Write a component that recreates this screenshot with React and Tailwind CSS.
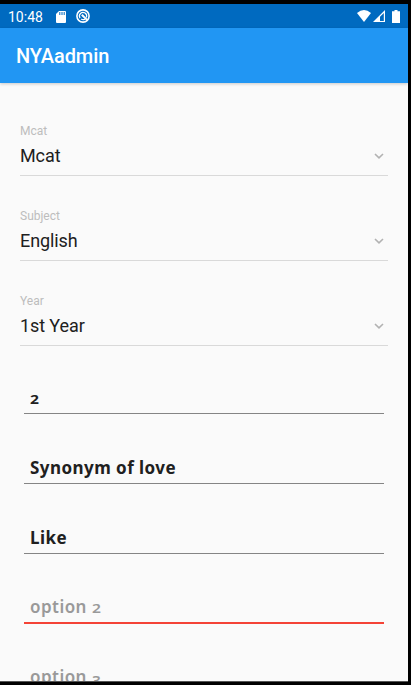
import React from "react";

function StatusBar() {
  return (
    <div className="flex h-6 items-center bg-[#006ac0] pl-2 text-white">
      <span className="w-12 pt-px text-[14px] leading-6">10:48</span>
      <svg className="mt-px" width="10" height="12" viewBox="0 0 10 12" fill="none">
        <path d="M3 0H9Q10 0 10 1V11Q10 12 9 12H1Q0 12 0 11V3Z" fill="#fff" />
        <path d="M3.8 1V4M6 1V4M8.2 1V4" stroke="#006ac0" strokeWidth="1" />
      </svg>
      <svg className="ml-[10px]" width="14" height="14" viewBox="0 0 14 14" fill="none" stroke="#fff">
        <circle cx="7" cy="7" r="6.1" strokeWidth="1.6" />
        <path d="M4.1 9.1A3.6 3.6 0 1 1 10.3 8.5M5.1 10.1Q7 11.3 9 10.2" strokeWidth="1.2" />
        <path d="M5.8 5.8L11 10.9" strokeWidth="2" />
      </svg>
      <svg className="ml-auto" width="14" height="12" viewBox="0 0 14 12">
        <path d="M0 3Q7-3 14 3L7 12Z" fill="#fff" />
      </svg>
      <svg className="ml-[2px]" width="12" height="12" viewBox="0 0 12 12">
        <path d="M0 12L12 0V12Z" fill="#fff" />
        <path d="M7 6.8L10.8 3V10.9H7Z" fill="#006ac0" />
      </svg>
      <svg className="ml-[7px] mr-2" width="8" height="13" viewBox="0 0 8 13">
        <path d="M2.5 0H5.5V1.2H8V13H0V1.2H2.5Z" fill="#fff" />
      </svg>
    </div>
  );
}

function SelectField({ label, value }) {
  return (
    <div className="mx-5 flex h-[85px] flex-col">
      <span className="text-[12px] leading-4 text-[#bdbdbd]">{label}</span>
      <div className="mt-[5px] flex h-6 items-center justify-between">
        <span className="text-[18px] leading-6 tracking-[-0.1px] text-[#202020]">{value}</span>
        <svg className="mr-1 mb-px" width="10" height="6" viewBox="0 0 10 6" fill="none">
          <path d="M1 1L5 4.8L9 1" stroke="#b2b2b2" strokeWidth="1.6" />
        </svg>
      </div>
      <div className="mt-[7px] h-px shrink-0 bg-[#d9d9d9]" />
    </div>
  );
}

function Numeral({ children, low }) {
  return (
    <span className={low ? "relative top-[3px] inline-block origin-bottom-left scale-x-110 text-[14px] leading-none" : "inline-block origin-bottom-left scale-x-[1.2] text-[13px] leading-none"}>
      {children}
    </span>
  );
}

function TextField({ children, hint, error }) {
  return (
    <div className="mx-6 h-[69.8px] shrink-0">
      <div className={`h-[29px] whitespace-pre pl-[6px] pt-[2px] font-['Noto_Sans','Open_Sans',sans-serif] text-[17px] leading-6 ${hint ? "font-semibold tracking-[0.45px] text-[#999]" : "font-bold tracking-[0.45px] text-[#202020]"}`}>
        {children}
      </div>
      <div className={error ? "h-[2px] bg-[#f44336]" : "h-px bg-[#858585]"} />
    </div>
  );
}

export default function App() {
  return (
    <div className="h-[685px] w-[411px] overflow-hidden bg-black pb-[3px] pr-[3px] pt-1 font-['Roboto',sans-serif]">
      <div className="flex h-[678px] flex-col overflow-hidden border-b border-[#555] bg-[#fafafa]">
        <StatusBar />
        <header className="flex h-[55px] shrink-0 items-center bg-[#2196f3] pl-4 text-[20px] font-medium tracking-[-0.1px] text-white shadow-[0_1px_3px_rgba(0,0,0,0.2)]">
          <h1>NYAadmin</h1>
        </header>
        <main className="flex flex-col pt-10">
          <SelectField label="Mcat" value="Mcat" />
          <SelectField label="Subject" value="English" />
          <SelectField label="Year" value="1st Year" />
          <div className="flex flex-col pt-[6px]">
            <TextField><Numeral>2</Numeral></TextField>
            <TextField>Synonym of love</TextField>
            <TextField>Like</TextField>
            <TextField hint error>option <Numeral>2</Numeral></TextField>
            <TextField hint>option <Numeral low>3</Numeral></TextField>
          </div>
        </main>
      </div>
    </div>
  );
}
